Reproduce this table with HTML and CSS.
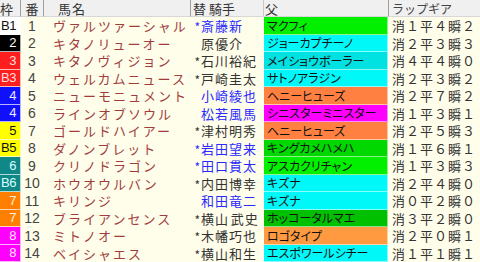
FILE: index.html
```html
<!DOCTYPE html>
<html lang="ja">
<head>
<meta charset="utf-8">
<link rel="stylesheet" href="styles.css">
</head>
<body>
<div class="table">
  <div class="h h-waku">枠</div>
  <div class="h h-ban">番</div>
  <div class="h h-name">馬名</div>
  <div class="h h-jockey">替&nbsp;騎手</div>
  <div class="h h-sire">父</div>
  <div class="h h-gear">ラップギア</div>

  <div class="waku w1">B1</div><div class="ban">1</div><div class="name">ヴァルツァーシャル</div><div class="chg blue">*</div><div class="jockey blue">斎藤新</div><div class="sire lime">マクフィ</div><div class="gear">消１平４瞬２</div>
  <div class="waku w2">2</div><div class="ban">2</div><div class="name">キタノリューオー</div><div class="chg"></div><div class="jockey">原優介</div><div class="sire cyan">ジョーカプチーノ</div><div class="gear">消２平３瞬３</div>
  <div class="waku w3">3</div><div class="ban">3</div><div class="name">キタノヴィジョン</div><div class="chg">*</div><div class="jockey">石川裕紀</div><div class="sire cyan2">メイショウボーラー</div><div class="gear">消４平４瞬０</div>
  <div class="waku w3">B3</div><div class="ban">4</div><div class="name">ウェルカムニュース</div><div class="chg">*</div><div class="jockey">戸崎圭太</div><div class="sire cyan">サトノアラジン</div><div class="gear">消２平３瞬２</div>
  <div class="waku w4">4</div><div class="ban">5</div><div class="name">ニューモニュメント</div><div class="chg"></div><div class="jockey blue">小崎綾也</div><div class="sire orange">ヘニーヒューズ</div><div class="gear">消２平７瞬２</div>
  <div class="waku w4">4</div><div class="ban">6</div><div class="name">ラインオブソウル</div><div class="chg"></div><div class="jockey blue">松若風馬</div><div class="sire magenta">シニスターミニスター</div><div class="gear">消１平３瞬１</div>
  <div class="waku w5">5</div><div class="ban">7</div><div class="name">ゴールドハイアー</div><div class="chg">*</div><div class="jockey">津村明秀</div><div class="sire orange">ヘニーヒューズ</div><div class="gear">消２平５瞬３</div>
  <div class="waku w5">B5</div><div class="ban">8</div><div class="name">ダノンブレット</div><div class="chg blue">*</div><div class="jockey blue">岩田望来</div><div class="sire green">キングカメハメハ</div><div class="gear">消１平６瞬１</div>
  <div class="waku w6">6</div><div class="ban">9</div><div class="name">クリノドラゴン</div><div class="chg blue">*</div><div class="jockey blue">田口貫太</div><div class="sire lime">アスカクリチャン</div><div class="gear">消１平３瞬３</div>
  <div class="waku w6">B6</div><div class="ban">10</div><div class="name">ホウオウルバン</div><div class="chg">*</div><div class="jockey">内田博幸</div><div class="sire cyan">キズナ</div><div class="gear">消２平４瞬０</div>
  <div class="waku w7">7</div><div class="ban">11</div><div class="name">キリンジ</div><div class="chg"></div><div class="jockey blue">和田竜二</div><div class="sire cyan">キズナ</div><div class="gear">消０平２瞬０</div>
  <div class="waku w7">7</div><div class="ban">12</div><div class="name">ブライアンセンス</div><div class="chg">*</div><div class="jockey">横山&#8202;武史</div><div class="sire dgreen">ホッコータルマエ</div><div class="gear">消３平２瞬０</div>
  <div class="waku w8">8</div><div class="ban">13</div><div class="name">ミトノオー</div><div class="chg">*</div><div class="jockey">木幡巧也</div><div class="sire lorange">ロゴタイプ</div><div class="gear">消２平０瞬１</div>
  <div class="waku w8">8</div><div class="ban">14</div><div class="name">ベイシャエス</div><div class="chg">*</div><div class="jockey">横山和生</div><div class="sire cyan">エスポワールシチー</div><div class="gear">消１平１瞬１</div>
</div>
</body>
</html>
```

FILE: styles.css
```css
html, body {
  margin: 0;
  padding: 0;
  background: #fffeea;
}
body {
  width: 480px;
  height: 262px;
  overflow: hidden;
  font-family: "Noto Sans CJK JP", "Noto Sans", sans-serif;
}
.table {
  display: grid;
  grid-template-columns: 21px 23px 147px 9px 64px 125px 91px;
  grid-template-rows: 17px;
  grid-auto-rows: 17.5px;
}
.table > div {
  display: flex;
  align-items: center;
  white-space: nowrap;
  box-sizing: border-box;
  min-width: 0;
}
.h {
  background: #f0f0f0;
  color: #333;
  font-size: 13px;
  border-bottom: 1px solid #d8d8d8;
  border-right: 1px solid #a0a0a0;
  padding-left: 2px;
}
.h-waku { padding-left: 0; }
.h-ban { justify-content: center; padding-left: 0; }
.h-name { padding-left: 14px; letter-spacing: 1px; }
.h-jockey { grid-column: span 2; padding-left: 2px; border-right-color: #c8c8c8; }
.h-sire { padding-left: 1px; }
.h-gear { border-right: none; font-size: 12px; padding-left: 3px; color: #444; }

.waku {
  justify-content: flex-end;
  padding-right: 4px;
  font-family: "Liberation Sans", sans-serif;
  font-size: 13px;
  letter-spacing: -0.5px;
  border-right: 1px solid rgba(255,255,255,.7);
  border-bottom: 1px solid rgba(255,255,255,.7);
}
.w1 { background: #ffffff; color: #111; }
.w2 { background: #000000; color: #fff; }
.w3 { background: #ff1e1e; color: #ffdede; }
.w4 { background: #1010ff; color: #e8e8ff; }
.w5 { background: #ffff00; color: #111; }
.w6 { background: #108888; color: #d8ffff; }
.w7 { background: #ff8000; color: #ffeedd; }
.w8 { background: #ff00ff; color: #ffe8ff; }

.ban {
  justify-content: center;
  font-family: "Liberation Sans", sans-serif;
  font-size: 14px;
  color: #444;
  padding-right: 1px;
}
.name {
  padding-left: 9px;
  font-size: 13px;
  letter-spacing: 2px;
  color: #a03c3c;
  overflow: hidden;
}
.chg {
  justify-content: flex-end;
  font-size: 12px;
  color: #333;
  padding-top: 2px;
}
.jockey {
  padding-left: 1px;
  font-size: 13px;
  letter-spacing: 1px;
  color: #333;
}
.blue { color: #2a2aff; }

.sire {
  padding-left: 3px;
  font-size: 12px;
  color: #111;
  font-feature-settings: "palt";
  border-bottom: 1px solid rgba(255,255,255,.55);
  border-right: 1px solid rgba(255,255,255,.55);
  margin-right: 1px;
}
.lime { background: #00f000; }
.cyan { background: #00f8f8; }
.cyan2 { background: #00e2e2; }
.orange { background: #ff8040; }
.lorange { background: #ff9a40; }
.magenta { background: #ff00ff; }
.green { background: #00d800; }
.dgreen { background: #00c000; }

.gear {
  padding-left: 3px;
  font-size: 13px;
  letter-spacing: 1px;
  color: #333;
}
```
